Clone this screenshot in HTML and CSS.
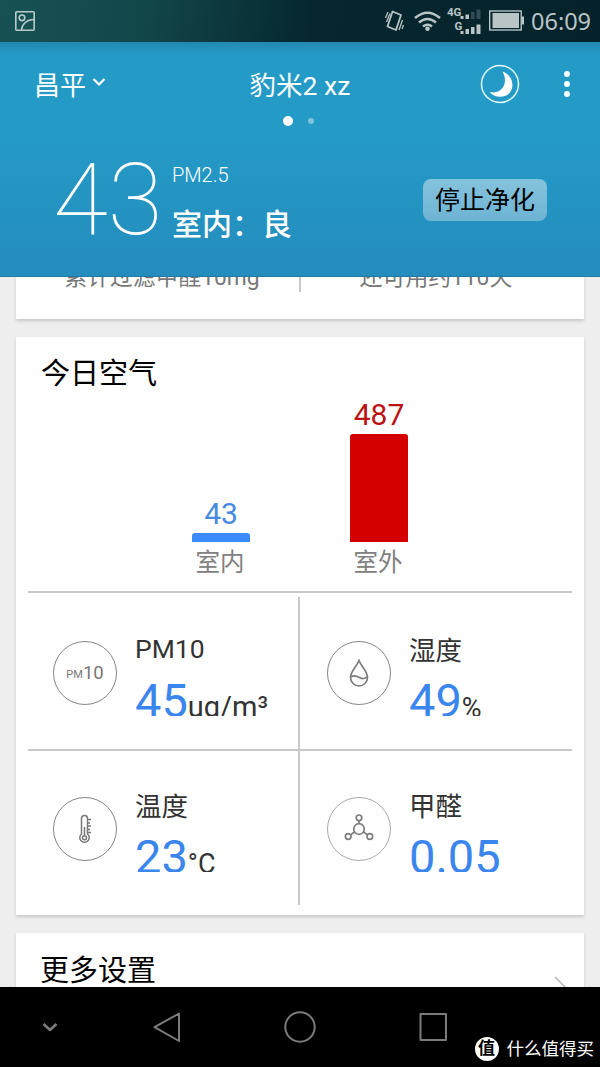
FILE: index.html
```html
<!DOCTYPE html>
<html lang="zh-CN">
<head>
  <meta charset="UTF-8">
  <title>豹米2 xz</title>
  <link rel="stylesheet" href="styles.css">
</head>
<body>
<div class="screen">
  <!-- 状态栏 -->
  <div class="status">
    <svg class="s-pic" width="20" height="20" viewBox="0 0 20 20" fill="none" stroke="#b5cccb" stroke-width="1.6">
      <rect x="0.8" y="0.8" width="18.4" height="18.4" rx="1"/>
      <circle cx="7" cy="6.8" r="2.8"/>
      <path d="M6.5 19C7 13 12 8.5 19 8.5"/>
    </svg>
    <svg class="s-icons" width="140" height="30" viewBox="0 0 140 30" fill="none" stroke="#b8c4c6">
      <path d="M8.500 5.500L17 9L12 24L3.500 20.500Z" stroke-width="1.800" stroke-linejoin="round"/>
      <path d="M4 6L1.500 12M6 7.500L2.500 16M18.500 14L15 24M19.500 19L18 23" stroke-width="1.300"/>
      <path d="M31 12Q43.500 1.500 56 12M35 16.500Q43.500 9.500 52 16.500M39 20.500Q43.500 17 48 20.500" stroke-width="2.600"/>
      <circle cx="43.500" cy="22.800" r="2.300" fill="#b8c4c6" stroke="none"/>
      <text x="63" y="9.500" class="s-net">4G</text>
      <text x="70.500" y="24" class="s-net">G</text>
      <g fill="#b8c4c6" stroke="none">
        <rect x="76.500" y="10" width="3" height="3"/>
        <rect x="81.500" y="8.500" width="3.500" height="4.500"/>
        <rect x="87" y="6" width="3.500" height="7" opacity=".25"/>
        <rect x="92.500" y="3.500" width="4" height="9.500" opacity=".25"/>
        <rect x="76.500" y="25" width="3" height="3"/>
        <rect x="81.500" y="23" width="3.500" height="5"/>
        <rect x="87" y="21" width="3.500" height="7"/>
        <rect x="92.500" y="18.500" width="4" height="9.500"/>
        <rect x="108.500" y="7" width="26.500" height="15"/>
        <rect x="137.500" y="10.500" width="2.500" height="8"/>
      </g>
      <rect x="105.700" y="5" width="31.500" height="19" stroke-width="1.400"/>
    </svg>
    <span class="s-time">06:09</span>
  </div>

  <!-- 顶部 -->
  <header class="header">
    <div class="title-row">
      <div class="city">昌平
        <svg width="14" height="10" viewBox="0 0 14 10" fill="none" stroke="#fff" stroke-width="2.200"><path d="M1.500 2L7 7.500L12.500 2"/></svg>
      </div>
      <div class="device">豹米2 xz</div>
      <div class="actions">
        <svg width="40" height="40" viewBox="0 0 40 40">
          <circle cx="20" cy="20" r="18.500" fill="none" stroke="#e4fbff" stroke-width="1.500"/>
          <path d="M22.500 7.500C36 12 36 32 21 32.800C16 33 12 31 9.800 28C22 31 29 19 22.500 7.500Z" fill="#fff"/>
        </svg>
        <svg width="6" height="28" viewBox="0 0 6 28" fill="#fff"><circle cx="3" cy="4" r="2.900"/><circle cx="3" cy="14" r="2.900"/><circle cx="3" cy="24" r="2.900"/></svg>
      </div>
    </div>
    <div class="dots"><i class="dot on"></i><i class="dot"></i></div>
    <div class="reading">
      <div class="num">43</div>
      <div class="desc">
        <div class="pm">PM2.5</div>
        <div class="level">室内：良</div>
      </div>
      <button class="stop">停止净化</button>
    </div>
  </header>

  <!-- 内容 -->
  <main class="content">
    <section class="card filter">
      <div class="filter-item">累计过滤甲醛10mg</div>
      <div class="filter-item">还可用约110天</div>
    </section>

    <section class="card air">
      <h2>今日空气</h2>
      <div class="chart">
        <div class="col blue">
          <span class="val">43</span>
          <div class="bar in"></div>
          <span class="name">室内</span>
        </div>
        <div class="col red">
          <span class="val">487</span>
          <div class="bar out"></div>
          <span class="name">室外</span>
        </div>
      </div>
      <div class="grid">
        <div class="cell">
          <div class="circle"><small>PM</small>10</div>
          <div class="info">
            <div class="label latin">PM10</div>
            <div class="value">45<span class="unit wide">ug/m³</span></div>
          </div>
        </div>
        <div class="cell">
          <div class="circle">
            <svg width="20" height="28" viewBox="0 0 20 28" fill="none" stroke="#7d7d7d" stroke-width="1.700">
              <path d="M10 1.500C8 7 1.500 12.500 1.500 18.500A8.500 8.500 0 0 0 18.500 18.500C18.500 12.500 12 7 10 1.500Z"/>
              <path d="M1.500 18C5 15.500 8 17 10.500 18.500C13 20 16 20 18.500 17.500"/>
            </svg>
          </div>
          <div class="info">
            <div class="label">湿度</div>
            <div class="value">49<span class="unit">%</span></div>
          </div>
        </div>
        <div class="cell">
          <div class="circle">
            <svg width="12" height="30" viewBox="0 0 12 30" fill="none" stroke="#777" stroke-width="1.500">
              <path d="M2.500 20V4.500A3 3 0 0 1 8.500 4.500V20A4.700 4.700 0 1 1 2.500 20Z"/>
              <circle cx="5.500" cy="23.700" r="2"/>
              <path d="M5.500 13V21M8.500 5.500H12M8.500 9H11M8.500 12H12M8.500 15.500H11M8.500 18.500H12"/>
            </svg>
          </div>
          <div class="info">
            <div class="label">温度</div>
            <div class="value">23<span class="unit">°C</span></div>
          </div>
        </div>
        <div class="cell">
          <div class="circle light">
            <svg width="30" height="30" viewBox="0 0 30 30" fill="none" stroke="#7d7d7d" stroke-width="1.700">
              <circle cx="15" cy="15" r="5.300"/>
              <circle cx="15" cy="3.800" r="2.800"/>
              <circle cx="4.200" cy="22.500" r="2.800"/>
              <circle cx="25.800" cy="22.500" r="2.800"/>
              <path d="M15 6.600V9.700M10.500 18L6.500 20.900M19.500 18L23.500 20.900"/>
            </svg>
          </div>
          <div class="info">
            <div class="label">甲醛</div>
            <div class="value">0.05</div>
          </div>
        </div>
      </div>
    </section>

    <section class="card more">
      <h2>更多设置</h2>
      <svg width="18" height="34" viewBox="0 0 18 34" fill="none" stroke="#b5b5b5" stroke-width="1.500"><path d="M1 1L17 17L1 33"/></svg>
    </section>
  </main>

  <!-- 导航键 -->
  <nav class="navbar">
    <svg width="600" height="80" viewBox="0 0 600 80" fill="none" stroke="#7b7b7b" stroke-width="2" stroke-linejoin="round">
      <path d="M43.500 37L50 43L56.500 37" stroke-width="2.600"/>
      <path d="M179 26.500V54L154.500 40.200Z"/>
      <circle cx="300" cy="40" r="14.700"/>
      <rect x="420.500" y="27" width="25.500" height="26"/>
    </svg>
  </nav>
  <div class="mark"><span class="mark-logo">值</span>什么值得买</div>
</div>
</body>
</html>
```
FILE: styles.css
```css
body { margin:0; background:#000; font-family:Roboto, 'Noto Sans CJK SC', sans-serif; }
.screen { position:relative; width:600px; height:1067px; display:flex; flex-direction:column; overflow:hidden; }

.status { height:42px; flex:none; display:flex; align-items:center; box-sizing:border-box; padding:0 9px 0 15px; background:linear-gradient(100deg, #185255 0%, #12474a 24%, #06272f 52%, #05222a 100%); }
.s-icons { margin-left:auto; }
.s-net { font-size:11.5px; font-weight:700; fill:#b8c4c6; stroke:none; }
.s-time { width:60px; margin-left:7px; color:#b8c4c6; font-size:23.5px; line-height:42px; font-family:'Noto Sans', sans-serif; white-space:nowrap; }

.header { height:235px; flex:none; color:#fff; box-sizing:border-box; padding-top:10px; background:linear-gradient(#2389b0 0, #249bc7 14px, #249ac7 40%, #248dbd 100%); border-bottom:1px solid #2579a0; }
.title-row { height:64px; display:grid; grid-template-columns:150px 300px 150px; align-items:center; font-size:26px; }
.city { padding:0 0 2px 34px; display:flex; align-items:center; gap:6px; }
.city svg { margin-top:-2px; }
.device { text-align:center; font-size:26.5px; padding-bottom:2px; }
.actions { display:flex; align-items:center; gap:44px; padding-left:30px; }
.dots { height:9px; display:flex; justify-content:center; align-items:center; gap:15px; padding-right:3px; }
.dot { width:6px; height:6px; border-radius:50%; background:#7cc3de; }
.dot.on { width:10px; height:10px; background:#fff; }
.reading { height:151px; display:flex; }
.num { width:119px; margin-left:53px; font-size:100px; font-weight:100; line-height:149px; letter-spacing:0; }
.pm { margin-top:38px; font-size:20px; font-weight:300; line-height:24px; }
.level { margin-top:19px; font-size:30px; font-weight:500; line-height:38px; }
.stop { margin:54px 53px 0 auto; width:124px; height:42px; padding:2px 0 0; border:0; border-radius:8px; background:linear-gradient(#86c3dc, #6db3d4); color:#000; font-family:inherit; font-size:25px; line-height:40px; }

.content { height:710px; flex:none; overflow:hidden; background:#eee; padding:0 16px; }
.card { background:#fff; box-shadow:0 2px 3px rgba(0,0,0,.16); margin-bottom:18px; }
.card h2 { margin:0; font-size:29px; font-weight:400; line-height:40px; color:#000; }
.filter { height:42px; display:grid; grid-template-columns:285px 283px; }
.filter-item { height:30px; margin-top:-15px; text-align:center; font-size:22.8px; line-height:32px; color:#777; white-space:nowrap; }
.filter-item:first-child { border-right:2px solid #c8c8c8; padding-left:9px; }
.filter-item:last-child { padding-right:13px; }

.air { height:578px; box-sizing:border-box; padding:17px 12px 0; }
.air h2 { padding-left:13px; }
.chart { height:197px; display:flex; align-items:flex-end; gap:100px; padding-left:164px; border-bottom:2px solid #c8c8c8; }
.col { width:58px; display:flex; flex-direction:column; align-items:center; }
.val { font-size:30px; line-height:38px; }
.blue .val { color:#468ae0; }
.red .val { color:#bd1212; }
.bar { width:58px; border-radius:3px 3px 0 0; }
.bar.in { height:9px; background:#3b8bff; }
.bar.out { height:108px; background:#d40000; }
.name { height:49px; margin-left:-2px; font-size:24.5px; line-height:42px; color:#808080; }

.grid { display:grid; grid-template-columns:272px 272px; grid-template-rows:158px 154px; }
.cell { display:flex; box-sizing:border-box; padding:48px 0 0 25px; overflow:hidden; }
.cell:nth-child(odd) { background:linear-gradient(#c8c8c8, #c8c8c8) right 0 top 4px / 2px 100% no-repeat; }
.cell:nth-child(3) { background-position:right 0 top 0; }
.cell:nth-child(even) { padding-left:27px; }
.cell:nth-child(-n+2) { border-bottom:2px solid #c8c8c8; }
.cell:nth-child(n+3) { padding-top:46px; }
.circle { width:62px; height:62px; border:1px solid #858585; border-radius:50%; display:flex; justify-content:center; align-items:center; font-size:18.5px; line-height:60px; color:#777; }
.circle.light { border-color:#aaa; }
.circle small { font-size:11px; padding-top:4px; }
.info { margin-left:18px; color:#333; }
.label { margin-top:-10px; padding-top:2px; font-size:26.5px; line-height:36px; }
.label.latin { padding:0 0 2px; }
.value { margin-top:4px; height:43px; overflow:hidden; font-size:47px; line-height:55px; color:#3b86ee; white-space:nowrap; }
.unit { font-size:27px; color:#333; }
.unit.wide { font-size:29px; }

.more { height:100px; padding:18px 12px 0 24px; display:flex; justify-content:space-between; box-sizing:border-box; }
.more svg { margin-top:25px; }

.navbar { height:80px; flex:none; background:#000; }
.mark { position:absolute; right:6px; bottom:5px; display:flex; align-items:center; gap:8px; color:#fff; font-size:17.5px; line-height:26px; }
.mark-logo { width:24px; height:24px; border-radius:50%; background:#fff; color:#000; font-size:17px; line-height:23px; font-weight:700; text-align:center; }
```
